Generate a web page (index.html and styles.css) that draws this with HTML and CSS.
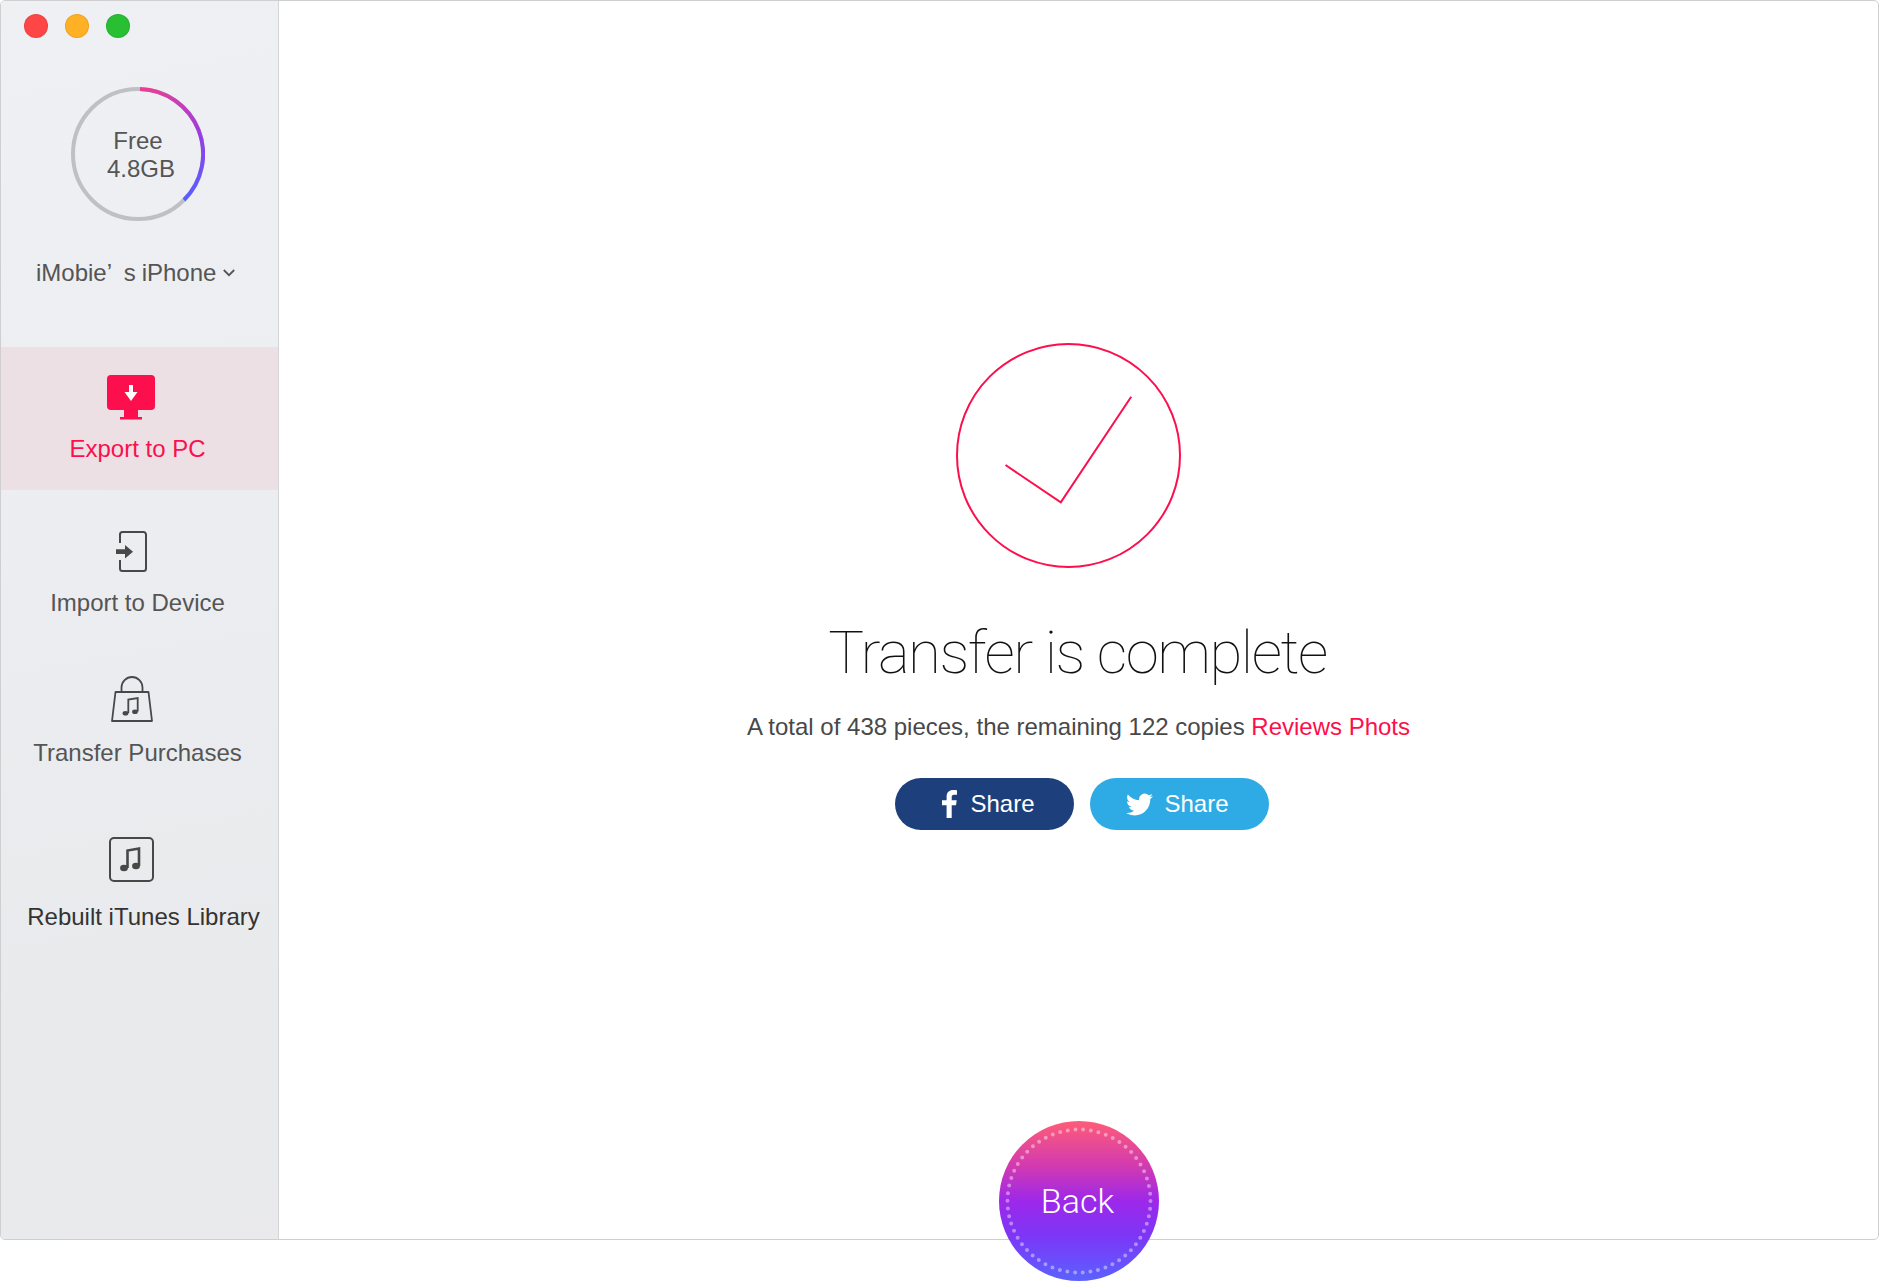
FILE: index.html
```html
<!DOCTYPE html>
<html lang="en">
<head>
<meta charset="utf-8">
<title>Transfer is complete</title>
<link rel="stylesheet" href="styles.css">
</head>
<body>
<div class="window">
  <aside class="sidebar">
    <div class="lights">
      <span class="light light-red"></span>
      <span class="light light-amber"></span>
      <span class="light light-green"></span>
    </div>
    <div class="gauge">
      <svg class="gauge-ring" width="134" height="134" viewBox="0 0 134 134">
        <defs>
          <linearGradient id="arc" gradientUnits="userSpaceOnUse" x1="69" y1="2" x2="113" y2="113">
            <stop offset="0" stop-color="#ea3f93"/>
            <stop offset=".55" stop-color="#9a3be6"/>
            <stop offset="1" stop-color="#575fff"/>
          </linearGradient>
        </defs>
        <circle cx="67" cy="67" r="65" fill="none" stroke="#bfc0c3" stroke-width="4"/>
        <path d="M69 2A65 65 0 0 1 113 113" fill="none" stroke="url(#arc)" stroke-width="4"/>
      </svg>
      <div class="gauge-text"><span>Free</span><span class="gauge-value">4.8GB</span></div>
    </div>
    <div class="device">
      <span class="device-name">iMobie’&nbsp; s iPhone</span>
      <svg class="chevron" width="12" height="8" viewBox="0 0 12 8"><path d="M.8 1l5.200 5.200L11.200 1" fill="none" stroke="#555" stroke-width="1.800"/></svg>
    </div>
    <nav class="nav">
      <div class="item item-export">
        <svg class="icon" width="48" height="45" viewBox="0 0 48 45">
          <rect x="0" y="0" width="48" height="35" rx="4" fill="#fc0f4c"/>
          <path d="M17 34h14v8H17zM13 42h22v2.400H13z" fill="#fc0f4c"/>
          <path d="M22 10h4v7h4.500L24 26l-6.500-9H22z" fill="#fff"/>
        </svg>
        <div class="label">Export to PC</div>
      </div>
      <div class="item item-import">
        <svg class="icon" width="31" height="41" viewBox="0 0 31 41">
          <path d="M4 12V3.500A2.500 2.500 0 0 1 6.500 1h21A2.500 2.500 0 0 1 30 3.500v34a2.500 2.500 0 0 1-2.500 2.500h-21A2.500 2.500 0 0 1 4 37.500V29" fill="none" stroke="#484848" stroke-width="2"/>
          <path d="M0 18.300h9V14l8 6.700-8 6.700v-4.300H0z" fill="#484848"/>
        </svg>
        <div class="label">Import to Device</div>
      </div>
      <div class="item item-bag">
        <svg class="icon" width="42" height="46" viewBox="0 0 42 46">
          <path d="M4.500 16H37.500L41 45H1z" fill="none" stroke="#484848" stroke-width="1.800" stroke-linejoin="round"/>
          <path d="M10.500 16V11.500a10.500 10.500 0 0 1 21 0V16" fill="none" stroke="#484848" stroke-width="1.800"/>
          <path d="M17.300 37V23.500l9.400-1.500V35.500" fill="none" stroke="#484848" stroke-width="1.800"/>
          <ellipse cx="14.500" cy="37.300" rx="2.900" ry="2.300" fill="#484848"/>
          <ellipse cx="24" cy="35.700" rx="2.900" ry="2.300" fill="#484848"/>
        </svg>
        <div class="label">Transfer Purchases</div>
      </div>
      <div class="item item-music">
        <svg class="icon" width="45" height="45" viewBox="0 0 45 45">
          <rect x="1" y="1" width="43" height="43" rx="4" fill="none" stroke="#484848" stroke-width="2"/>
          <path d="M18.500 31V13.500l11.500-2V29" fill="none" stroke="#484848" stroke-width="2.600"/>
          <ellipse cx="15" cy="31" rx="3.900" ry="3.200" fill="#484848"/>
          <ellipse cx="27" cy="29" rx="3.900" ry="3.200" fill="#484848"/>
        </svg>
        <div class="label label-dark">Rebuilt iTunes Library</div>
      </div>
    </nav>
  </aside>
  <main class="main">
    <svg class="done" width="225" height="225" viewBox="0 0 225 225">
      <circle cx="112.500" cy="112.500" r="111.500" fill="none" stroke="#fc0f4c" stroke-width="2"/>
      <path d="M49.500 122L104.800 159.300L175.200 53.700" fill="none" stroke="#fc0f4c" stroke-width="2"/>
    </svg>
    <h1 class="title">Transfer is complete</h1>
    <p class="summary">A total of 438 pieces, the remaining 122 copies <a class="accent">Reviews Phots</a></p>
    <div class="shares">
      <div class="share share-fb">
        <svg width="15" height="28" viewBox="0 0 15 28"><path d="M9.700 28V15.300h4.300l.700-5H9.700V7.200c0-1.500.4-2.400 2.500-2.400H15V.3C14.500.2 12.900 0 11.100 0 7.300 0 4.600 2.300 4.600 6.600v3.700H0v5h4.600V28z" fill="#fff"/></svg>
        <span>Share</span>
      </div>
      <div class="share share-tw">
        <svg width="27" height="23" viewBox="0 2 24 20"><path d="M23.953 4.570a10 10 0 0 1-2.825.775 4.958 4.958 0 0 0 2.163-2.723c-.951.555-2.005.959-3.127 1.184a4.920 4.920 0 0 0-8.384 4.482C7.690 8.095 4.067 6.130 1.640 3.162a4.822 4.822 0 0 0-.666 2.475c0 1.710.870 3.213 2.188 4.096a4.904 4.904 0 0 1-2.228-.616v.060a4.923 4.923 0 0 0 3.946 4.827 4.996 4.996 0 0 1-2.212.085 4.936 4.936 0 0 0 4.604 3.417 9.867 9.867 0 0 1-6.102 2.105c-.390 0-.779-.023-1.170-.067a13.995 13.995 0 0 0 7.557 2.209c9.053 0 13.998-7.496 13.998-13.985 0-.210 0-.420-.015-.630A9.935 9.935 0 0 0 24 4.590z" fill="#fff"/></svg>
        <span>Share</span>
      </div>
    </div>
    <div class="back">
      <svg class="back-dots" width="160" height="160" viewBox="0 0 160 160"><circle cx="80" cy="80" r="71.500" fill="none" stroke="#fff" stroke-opacity=".42" stroke-width="4" stroke-linecap="round" stroke-dasharray="0 7.740"/></svg>
      <span class="back-label">Back</span>
    </div>
  </main>
</div>
</body>
</html>
```
FILE: styles.css
```css
* { box-sizing: border-box; }
html, body { margin: 0; padding: 0; background: #fff; }
body { height: 1281px; overflow: hidden; font-family: "Liberation Sans", Arial, sans-serif; font-size: 24px; color: #555; }

.window {
  display: flex;
  width: 1879px;
  height: 1240px;
  border: 1px solid #cfcfcf;
  border-radius: 5px;
  background: #fff;
}

.sidebar {
  flex: 0 0 278px;
  height: 100%;
  border-right: 1px solid #d4d4d6;
  border-radius: 4px 0 0 4px;
  background: linear-gradient(170deg, #eef0f4 0%, #eceef2 35%, #e9eaec 80%, #eaeaec 100%);
}

.lights { display: flex; gap: 17px; padding: 13px 0 0 23px; }
.light { width: 24px; height: 24px; border-radius: 50%; border: 1px solid rgba(0,0,0,.08); }
.light-red { background: #ff4646; }
.light-amber { background: #ffb024; }
.light-green { background: #28bf33; }

.gauge { display: grid; width: 134px; height: 134px; margin: 49px 0 0 70px; }
.gauge-ring, .gauge-text { grid-area: 1 / 1; }
.gauge-text { display: flex; flex-direction: column; align-items: center; justify-content: center; line-height: 28px; padding-top: 1px; }
.gauge-value { margin-left: 6px; }

.device { display: flex; align-items: center; gap: 7px; margin: 38px 0 0 35px; line-height: 28px; }
.device-name { word-spacing: -.8px; }
.chevron { margin-top: 0; }

.nav { margin-top: 60px; }
.item { display: flex; flex-direction: column; align-items: center; padding-right: 4px; }
.icon { display: block; margin-right: 12px; }
.label { line-height: 28px; white-space: nowrap; }
.label-dark { color: #333; margin-left: 12px; }

.item-export { height: 143px; padding-top: 28px; background: #ece0e5; color: #fc0f4c; }
.item-export .icon { margin-right: 14px; }
.item-export .label { margin-top: 15px; }
.item-import { padding-top: 41px; }
.item-import .label { margin-top: 17px; }
.item-bag { padding-top: 59px; }
.item-bag .label { margin-top: 17px; }
.item-music { padding-top: 70px; }
.item-music .label { margin-top: 21px; }

.main { position: relative; flex: 1; display: flex; flex-direction: column; align-items: center; padding-top: 342px; }
.done { display: block; margin-right: 21px; }
.title { margin: 49px 2px 0 0; font-family: Roboto, "Liberation Sans", sans-serif; font-weight: 100; font-size: 60px; letter-spacing: -1.500px; line-height: 72px; color: #111; }
.summary { margin: 24px 0 0; line-height: 28px; color: #484848; }
.accent { color: #fc0f4c; }

.shares { display: flex; gap: 16px; margin: 37px 0 0 6px; }
.share { display: flex; align-items: center; height: 52px; border-radius: 26px; color: #fff; }
.share-fb { width: 179px; padding-left: 47px; gap: 14px; background: #1d407d; }
.share-tw { width: 179px; padding-left: 36px; gap: 12px; background: #2eaae5; }

.back {
  position: absolute;
  left: 50%;
  bottom: -42px;
  display: grid;
  place-items: center;
  width: 160px;
  height: 160px;
  margin-left: -80px;
  border-radius: 50%;
  background: linear-gradient(180deg, #ff5c78 0%, #d23ab0 28%, #9d28ea 50%, #7c36f6 72%, #5a62ff 100%);
}
.back-dots, .back-label { grid-area: 1 / 1; }
.back-label { margin-right: 2px; font-family: Roboto, "Liberation Sans", sans-serif; font-weight: 300; font-size: 34px; color: #fff; }
```
